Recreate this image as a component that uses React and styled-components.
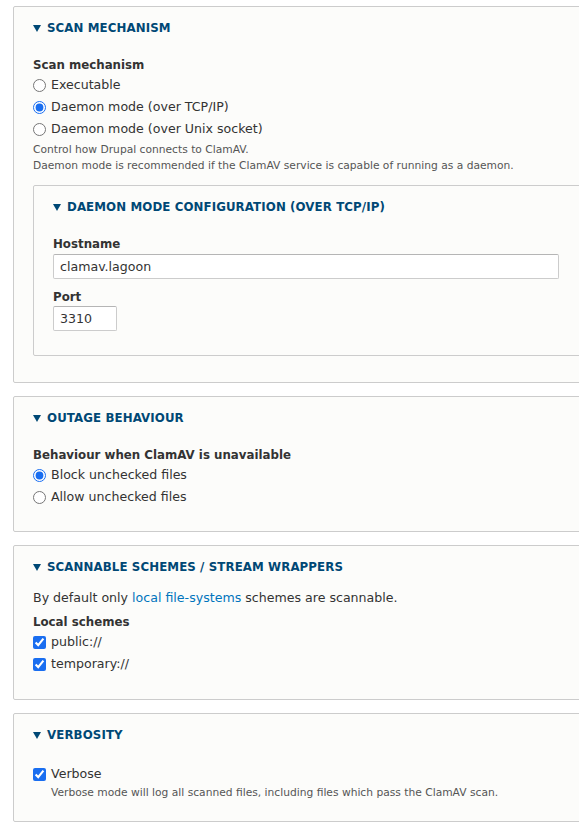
import styled, { createGlobalStyle } from "styled-components";

const GlobalStyle = createGlobalStyle`
  html, body {
    margin: 0;
    padding: 0;
    background: #fff;
    overflow-x: hidden;
  }
  body {
    font-family: "DejaVu Sans", "Liberation Sans", sans-serif;
    font-size: 12.6px;
    color: #333;
  }
`;

const Page = styled.div`
  padding: 6px 0 0 13px;
  width: 640px;
`;

const Fieldset = styled.section`
  box-sizing: border-box;
  width: ${(p) => (p.$nested ? "580px" : "600px")};
  margin: ${(p) => (p.$nested ? "11px 0 0" : "0 0 13px")};
  padding: 13px 0 ${(p) => p.$bottom || 24}px 19px;
  border: 1px solid #ccc;
  border-radius: 2px;
  background: #fcfcfa;
`;

const Legend = styled.div`
  display: flex;
  align-items: center;
  height: 16px;
  font-size: 11.8px;
  font-weight: bold;
  text-transform: uppercase;
  color: #004875;
  letter-spacing: 0.1px;

  &::before {
    content: "";
    width: 0;
    height: 0;
    margin-right: 6px;
    border-left: 4px solid transparent;
    border-right: 4px solid transparent;
    border-top: 7px solid #004875;
  }
`;

const Content = styled.div`
  display: flow-root;
  margin-top: 14px;
`;

const FormItem = styled.div`
  margin-top: ${(p) => (p.$gap !== undefined ? p.$gap : 7)}px;
`;

const Label = styled.div`
  font-size: 11.8px;
  font-weight: bold;
  line-height: 17px;
  margin-bottom: ${(p) => p.$mb || 0}px;
`;

const Option = styled.label`
  display: flex;
  align-items: center;
  height: 22px;
  line-height: 22px;

  input {
    margin: 0 5px 0 0;
    width: 13px;
    height: 13px;
    accent-color: #1a6ef0;
  }
`;

const Description = styled.div`
  margin-top: ${(p) => p.$mt || 0}px;
  padding-left: ${(p) => p.$indent || 0}px;
  font-size: 10.7px;
  line-height: 16px;
  color: #555;
`;

const Text = styled.div`
  line-height: 18px;

  a {
    color: #0074bd;
    text-decoration: none;
  }
`;

const TextInput = styled.input`
  box-sizing: border-box;
  display: block;
  width: ${(p) => p.$w}px;
  height: 25px;
  padding: 0 6px;
  border: 1px solid #ccc;
  border-top-color: #b5b5b5;
  border-radius: 2px;
  background: #fff;
  font-family: "DejaVu Sans", "Liberation Sans", sans-serif;
  font-size: 12.6px;
  color: #333;
`;

const Radio = ({ label, checked, name }) => (
  <Option>
    <input type="radio" name={name} defaultChecked={checked} />
    {label}
  </Option>
);

const Check = ({ label, checked }) => (
  <Option>
    <input type="checkbox" defaultChecked={checked} />
    {label}
  </Option>
);

const App = () => {
  return (
    <Page>
      <GlobalStyle />
      <Fieldset $bottom={26}>
        <Legend>Scan mechanism</Legend>
        <Content>
          <FormItem>
            <Label>Scan mechanism</Label>
            <Radio name="mech" label="Executable" />
            <Radio name="mech" label="Daemon mode (over TCP/IP)" checked />
            <Radio name="mech" label="Daemon mode (over Unix socket)" />
            <Description $mt={2}>
              Control how Drupal connects to ClamAV.
              <br />
              Daemon mode is recommended if the ClamAV service is capable of
              running as a daemon.
            </Description>
          </FormItem>
          <Fieldset $nested $bottom={24}>
            <Legend>Daemon mode configuration (over TCP/IP)</Legend>
            <Content>
              <FormItem>
                <Label $mb={1}>Hostname</Label>
                <TextInput $w={506} defaultValue="clamav.lagoon" />
              </FormItem>
              <FormItem $gap={10}>
                <Label>Port</Label>
                <TextInput $w={64} defaultValue="3310" />
              </FormItem>
            </Content>
          </Fieldset>
        </Content>
      </Fieldset>

      <Fieldset $bottom={23}>
        <Legend>Outage behaviour</Legend>
        <Content>
          <FormItem>
            <Label>Behaviour when ClamAV is unavailable</Label>
            <Radio name="outage" label="Block unchecked files" checked />
            <Radio name="outage" label="Allow unchecked files" />
          </FormItem>
        </Content>
      </Fieldset>

      <Fieldset $bottom={24}>
        <Legend>Scannable schemes / stream wrappers</Legend>
        <Content>
          <Text>
            By default only <a href="#">local file-systems</a> schemes are
            scannable.
          </Text>
          <FormItem>
            <Label>Local schemes</Label>
            <Check label="public://" checked />
            <Check label="temporary://" checked />
          </FormItem>
        </Content>
      </Fieldset>

      <Fieldset $bottom={20}>
        <Legend>Verbosity</Legend>
        <Content>
          <FormItem $gap={6}>
            <Check label="Verbose" checked />
            <Description $indent={18}>
              Verbose mode will log all scanned files, including files which
              pass the ClamAV scan.
            </Description>
          </FormItem>
        </Content>
      </Fieldset>
    </Page>
  );
};

export default App;
